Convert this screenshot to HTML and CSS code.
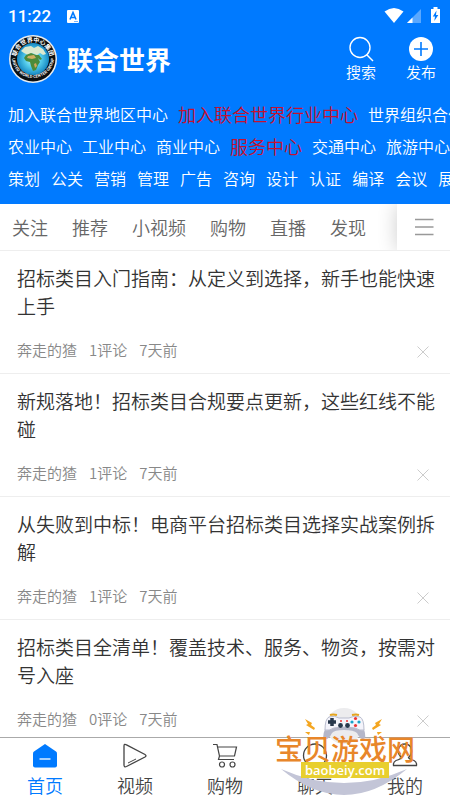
FILE: index.html
```html
<!DOCTYPE html>
<html lang="zh-CN">

<head>
    <meta charset="UTF-8">
    <meta name="viewport" content="width=device-width, initial-scale=1.0">
    <title>联合世界</title>
    <link rel="stylesheet" href="styles.css">
</head>

<body>

    <header class="header">
        <div class="status-bar">
            <span class="clock">11:22</span>
            <svg class="status-app" width="12" height="13" viewBox="0 0 12 13">
                <rect width="12" height="13" rx="1" fill="#fff" />
                <path d="M3 9.5 L6 2.5 L9 9.5 M4 7.5 H8" fill="none" stroke="#007aff" stroke-width="1.6" />
                <path d="M7 11.5 H11" stroke="#7ab6ff" />
            </svg>
            <svg class="status-icons" width="58" height="18" viewBox="0 0 58 18">
                <path d="M0.5 4.5 Q10 -2.500 19.500 4.500 L10 16 Z" fill="#fff" />
                <path d="M23 16 L37 2 V16 Z" fill="#5aa8ff" />
                <path d="M23 16 L28.500 10.500 V16 Z" fill="#fff" />
                <path d="M47 2 H49.500 V0 H53.500 V2 H56 V16 H47 Z" fill="#fff" />
                <path d="M52.500 3.500 L48.800 9.500 H51 L50.300 14 L54.300 8 H52 Z" fill="#007aff" />
            </svg>
        </div>

        <div class="brand-bar">
            <svg class="logo" width="48" height="48" viewBox="0 0 48 48">
                <defs>
                    <radialGradient id="sea">
                        <stop offset="0" stop-color="#c9f4fb" />
                        <stop offset="0.5" stop-color="#55cdec" />
                        <stop offset="1" stop-color="#1689c4" />
                    </radialGradient>
                    <path id="ringTop" d="M7.500 28 A17 17 0 1 1 40.500 28" />
                    <path id="ringBottom" d="M3 22 A21 21 0 0 0 45 22" />
                </defs>
                <circle cx="24" cy="24" r="24" fill="#e8edf0" />
                <circle cx="24" cy="24" r="22.500" fill="#0b0f12" />
                <circle cx="24" cy="24" r="16" fill="url(#sea)" />
                <path d="M12 16 L16 12 L22 11 L25 13 L29 11 L34 14 L37 19 L34 20 L31 18 L28 20 L23 18 L19 20 L15 18 Z" fill="#dce9cf" />
                <path d="M17 20 L22 18 L27 20 L30 20 L33 24 L31 25 L29 23 L31 27 L29 30 L27 35 L24 36 L22 31 L21 27 L17 26 L15 23 Z" fill="#4b8b3b" />
                <path d="M19 21 L25 20 L27 23 L23 24 L18 23 Z" fill="#cfae62" />
                <path d="M27 28 L28 31 L26 33 L25 29 Z" fill="#d2a55b" />
                <text class="logo-cn"><textPath href="#ringTop" startOffset="50%">联合世界中心集团</textPath></text>
                <text class="logo-en"><textPath href="#ringBottom" startOffset="50%">UNITED WORLD CENTER GROUP</textPath></text>
            </svg>
            <h1 class="brand">联合世界</h1>
            <a class="action" href="#search">
                <svg width="26" height="26" viewBox="0 0 26 26" fill="none" stroke="#fff" stroke-width="1.4">
                    <circle cx="12" cy="11.500" r="10" />
                    <path d="M18.500 18.500 L25 25" />
                </svg>
                搜索
            </a>
            <a class="action" href="#publish">
                <svg width="26" height="26" viewBox="0 0 26 26">
                    <circle cx="13" cy="13" r="12" fill="#fff" />
                    <path d="M13 6 V20 M6 13 H20" stroke="#007aff" stroke-width="1.6" />
                </svg>
                发布
            </a>
        </div>

        <nav class="channels">
            <div class="channel-row">
                <a href="#">加入联合世界地区中心</a>
                <a href="#" class="hot">加入联合世界行业中心</a>
                <a href="#">世界组织合作</a>
            </div>
            <div class="channel-row">
                <a href="#">农业中心</a>
                <a href="#">工业中心</a>
                <a href="#">商业中心</a>
                <a href="#" class="hot">服务中心</a>
                <a href="#">交通中心</a>
                <a href="#">旅游中心</a>
            </div>
            <div class="channel-row services">
                <a href="#">策划</a>
                <a href="#">公关</a>
                <a href="#">营销</a>
                <a href="#">管理</a>
                <a href="#">广告</a>
                <a href="#">咨询</a>
                <a href="#">设计</a>
                <a href="#">认证</a>
                <a href="#">编译</a>
                <a href="#">会议</a>
                <a href="#">展览</a>
            </div>
        </nav>
    </header>

    <div class="tabs">
        <nav class="tab-list">
            <a href="#">关注</a>
            <a href="#">推荐</a>
            <a href="#">小视频</a>
            <a href="#">购物</a>
            <a href="#">直播</a>
            <a href="#">发现</a>
        </nav>
        <button type="button" class="menu-button" aria-label="更多频道">
            <svg width="20" height="18" viewBox="0 0 20 18" stroke="#999" stroke-width="1.400">
                <path d="M1 1.500 H19.500 M1 9 H19.500 M1 16.500 H19.500" />
            </svg>
        </button>
    </div>

    <main class="feed">
        <article class="post">
            <h2><a href="#">招标类目入门指南：从定义到选择，新手也能快速上手</a></h2>
            <div class="meta">
                <span>奔走的猹</span><span>1评论</span><span>7天前</span>
                <button type="button" class="close" aria-label="关闭">
                    <svg width="12" height="12" viewBox="0 0 12 12"><path d="M0.500 0.500 L11.500 11.500 M11.500 0.500 L0.500 11.500" /></svg>
                </button>
            </div>
        </article>
        <article class="post">
            <h2><a href="#">新规落地！招标类目合规要点更新，这些红线不能碰</a></h2>
            <div class="meta">
                <span>奔走的猹</span><span>1评论</span><span>7天前</span>
                <button type="button" class="close" aria-label="关闭">
                    <svg width="12" height="12" viewBox="0 0 12 12"><path d="M0.500 0.500 L11.500 11.500 M11.500 0.500 L0.500 11.500" /></svg>
                </button>
            </div>
        </article>
        <article class="post">
            <h2><a href="#">从失败到中标！电商平台招标类目选择实战案例拆解</a></h2>
            <div class="meta">
                <span>奔走的猹</span><span>1评论</span><span>7天前</span>
                <button type="button" class="close" aria-label="关闭">
                    <svg width="12" height="12" viewBox="0 0 12 12"><path d="M0.500 0.500 L11.500 11.500 M11.500 0.500 L0.500 11.500" /></svg>
                </button>
            </div>
        </article>
        <article class="post">
            <h2><a href="#">招标类目全清单！覆盖技术、服务、物资，按需对号入座</a></h2>
            <div class="meta">
                <span>奔走的猹</span><span>0评论</span><span>7天前</span>
                <button type="button" class="close" aria-label="关闭">
                    <svg width="12" height="12" viewBox="0 0 12 12"><path d="M0.500 0.500 L11.500 11.500 M11.500 0.500 L0.500 11.500" /></svg>
                </button>
            </div>
        </article>
    </main>

    <footer class="bottom">
        <nav class="bottom-nav">
            <a href="#" class="active">
                <svg width="26" height="26" viewBox="0 0 26 26">
                    <path d="M13 1 L24 8.500 Q25 9.200 25 10.500 V22.500 Q25 24.500 23 24.500 H3 Q1 24.500 1 22.500 V10.500 Q1 9.200 2 8.500 Z" fill="#007aff" />
                    <path d="M7.500 16 H18.500" stroke="#fff" stroke-width="1.300" />
                </svg>
                首页
            </a>
            <a href="#">
                <svg width="26" height="26" viewBox="0 0 26 26" fill="none" stroke="#444" stroke-width="1.300">
                    <path d="M2 3 Q2 0.500 4.500 1.800 L23 11.500 Q25 12.800 23 14 L4.500 23.500 Q2 24.500 2 22 Z" />
                    <path d="M6 20 L14 16" stroke-width="1" />
                </svg>
                视频
            </a>
            <a href="#">
                <svg width="26" height="26" viewBox="0 0 26 26" fill="none" stroke="#444" stroke-width="1.200">
                    <path d="M1 1.500 H5 L7.500 13 L6.500 16.500 H22 M5.500 4 H24.500 L22.500 13 H7.500" />
                    <circle cx="10" cy="21.500" r="2.500" />
                    <circle cx="20.500" cy="21.500" r="2.500" />
                </svg>
                购物
            </a>
            <a href="#">
                <svg width="26" height="26" viewBox="0 0 26 26" fill="none" stroke="#444" stroke-width="1.300">
                    <path d="M5 20.500 Q1.500 17 1.500 12.500 A11.500 11.500 0 1 1 13 24 Q9 24 7 22.800 L3 24 Z" />
                </svg>
                聊天
            </a>
            <a href="#">
                <svg width="26" height="26" viewBox="0 0 26 26" fill="none" stroke="#444" stroke-width="1.300">
                    <path d="M9.500 14.500 C4 10 6 1 13 1 C20 1 22 10 16.500 14.500 Q17 16 22 17.500 Q25 19 24.500 22.500 H1.500 Q1 19 4 17.500 Q9 16 9.500 14.500 Z" />
                </svg>
                我的
            </a>
        </nav>

        <div class="watermark">
            <svg class="watermark-art" width="140" height="92" viewBox="0 0 140 92">
                <circle cx="69" cy="18" r="18" fill="#ececee" />
                <path d="M50 21 Q46 31 51 31 Q54 31 57 25 Q59 22 69 22 Q79 22 82 25 Q85 31 88 31 Q92 31 89 21 L80 19 H59 Z" fill="#b5b7c9" />
                <path d="M54 9 Q60 7 64 10 H74 Q79 7 85 9 Q89 11 89 22 Q85 23 80 20 Q70 18 59 20 Q54 23 50 22 Q50 11 54 9 Z" fill="#f4f4fb" stroke="#b9bccd" stroke-width="1" />
                <path d="M55 7 Q58 6 62 7 M77 7 Q81 6 84 7" fill="none" stroke="#e5a51f" stroke-width="2" />
                <path d="M57 10 V18 M53 14 H61" stroke="#27384c" stroke-width="3.500" />
                <circle cx="80.500" cy="10.500" r="1.600" fill="#e33" />
                <circle cx="80.500" cy="17.500" r="1.600" fill="#e33" />
                <circle cx="77" cy="14" r="1.600" fill="#17a2c9" />
                <circle cx="84" cy="14" r="1.600" fill="#17a2c9" />
                <circle cx="65.500" cy="17.500" r="2.400" fill="#27384c" />
                <circle cx="72.500" cy="17.500" r="2.400" fill="#27384c" />
                <path d="M65 13 H67 M71 13 H73" stroke="#e33" stroke-width="1.500" />
                <g fill="#f4a621">
                    <path d="M30 11 L37 15 L36 17 L40 20 L39 22 L31 17 L33 16 Z" />
                    <path d="M107 11 L100 15 L101 17 L97 20 L98 22 L106 17 L104 16 Z" />
                    <path d="M30 24 L35 24 L34 27 Z M107 24 L102 24 L103 27 Z" />
                </g>
                <path d="M6 61 Q69 113 132 61 Q69 89 6 61 Z" fill="#c3c5d7" />
            </svg>
            <strong class="watermark-name">宝贝游戏网</strong>
            <span class="watermark-site">baobeiy.com</span>
        </div>
    </footer>

</body>

</html>
```

FILE: styles.css
```css
* {
    box-sizing: border-box;
}

body {
    margin: 0;
    height: 100vh;
    display: flex;
    flex-direction: column;
    overflow: hidden;
    background: #fff;
    color: #333;
    font-family: "Noto Sans CJK SC", sans-serif;
    font-weight: 350;
}

a {
    color: inherit;
    text-decoration: none;
}

button {
    padding: 0;
    border: none;
    background: none;
    cursor: pointer;
}

svg {
    display: block;
}

/* blue header */
.header {
    flex: none;
    background: #007aff;
    color: #fff;
    padding-bottom: 10px;
}

.status-bar {
    display: flex;
    align-items: center;
    height: 32px;
    padding: 0 8px;
}

.clock {
    font-family: Roboto, sans-serif;
    font-size: 17px;
    font-weight: 500;
}

.status-app {
    margin-left: 16px;
}

.status-icons {
    margin-left: auto;
}

.brand-bar {
    display: flex;
    align-items: center;
    height: 54px;
    padding: 0 14px 0 9px;
}

.logo-cn,
.logo-en {
    fill: #fff;
    font-weight: bold;
    text-anchor: middle;
}

.logo-cn {
    font-size: 6px;
}

.logo-en {
    font-size: 4px;
}

.brand {
    flex: 1;
    margin: 0 0 0 10px;
    font-size: 26px;
    line-height: 28px;
}

.action {
    display: flex;
    flex-direction: column;
    align-items: center;
    margin-left: 30px;
    font-size: 15px;
    line-height: 20px;
}

.channels {
    padding: 12px 0 0 8px;
    overflow: hidden;
}

.channel-row {
    display: flex;
    align-items: center;
    gap: 10px;
    height: 32px;
    font-size: 16px;
    white-space: nowrap;
}

.channel-row.services {
    gap: 11px;
}

.channel-row .hot {
    color: #c8102e;
    font-size: 18px;
}

/* category tabs */
.tabs {
    flex: none;
    display: flex;
    justify-content: space-between;
    height: 47px;
    border-bottom: 1px solid #eee;
    overflow: hidden;
}

.tab-list {
    display: flex;
    align-items: center;
    gap: 24px;
    padding-left: 12px;
    color: #666;
    font-size: 18px;
    white-space: nowrap;
}

.menu-button {
    display: flex;
    align-items: center;
    justify-content: center;
    width: 53px;
    background: #fff;
    box-shadow: 0 0 20px rgba(0, 0, 0, 0.2);
}

/* article list */
.feed {
    flex: 1;
    min-height: 0;
    overflow: hidden;
}

.post {
    padding: 13px 14px 13px 17px;
    border-bottom: 1px solid #eee;
}

.post h2 {
    margin: 0 0 20px;
    font-size: 19px;
    font-weight: inherit;
    line-height: 28px;
}

.meta {
    display: flex;
    align-items: center;
    gap: 12px;
    color: #888;
    font-size: 15px;
    line-height: 20px;
}

.close {
    margin: 4px 7px 0 auto;
}

.close path {
    stroke: #ccc;
}

/* bottom bar */
.bottom {
    flex: none;
    position: relative;
    border-top: 1px solid #aaa;
    background: #fff;
}

.bottom-nav {
    display: flex;
}

.bottom-nav a {
    flex: 1;
    display: flex;
    flex-direction: column;
    align-items: center;
    gap: 3px;
    padding: 5px 0 2px;
    color: #444;
    font-size: 18px;
    line-height: 26px;
}

.bottom-nav .active {
    color: #007aff;
}

/* site badge lying over the bar */
.watermark {
    position: absolute;
    right: 35px;
    bottom: 0;
    width: 140px;
    height: 92px;
    display: flex;
    flex-direction: column;
    align-items: center;
    padding-top: 26px;
    pointer-events: none;
}

.watermark-art {
    position: absolute;
    left: 0;
    top: 0;
}

.watermark-name {
    position: relative;
    color: #e8862a;
    font-size: 28px;
    font-weight: 500;
    line-height: 28px;
}

.watermark-site {
    position: relative;
    padding: 0 4px;
    background: #e8cf2e;
    color: #fff;
    font-family: "Open Sans", sans-serif;
    font-size: 13px;
    font-weight: 600;
    line-height: 16px;
}
```
